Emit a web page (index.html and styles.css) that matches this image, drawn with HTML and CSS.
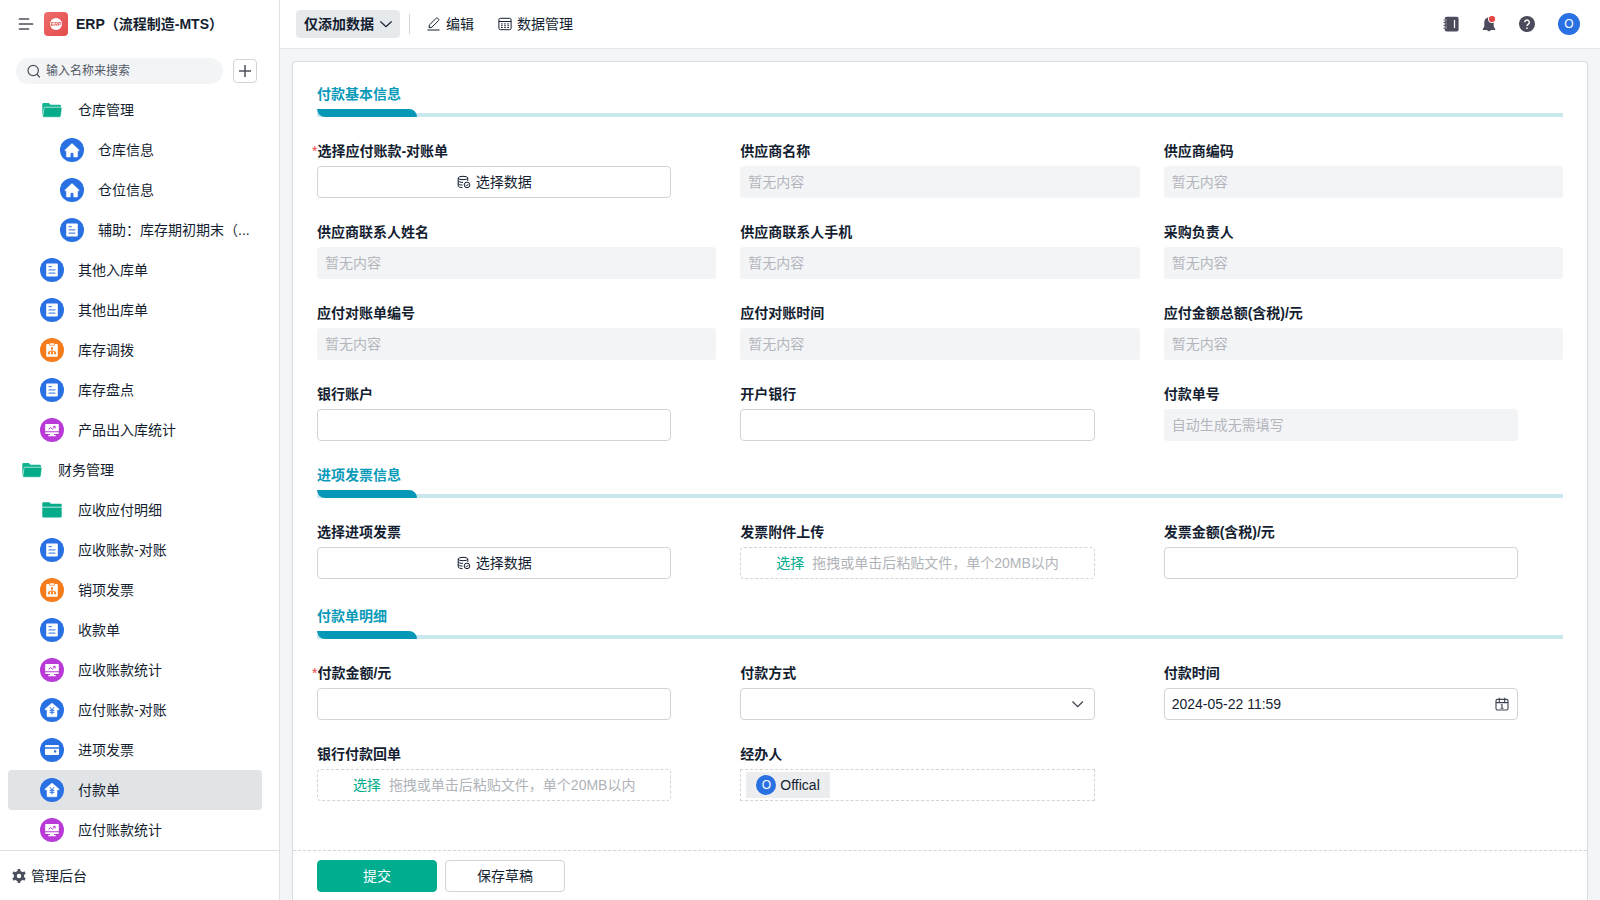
FILE: index.html
```html
<!DOCTYPE html>
<html lang="zh-CN">
<head>
<meta charset="utf-8">
<meta name="viewport" content="width=device-width, initial-scale=1">
<title>ERP（流程制造-MTS）</title>
<link rel="stylesheet" href="styles.css">
</head>
<body>
<svg class="sprite" aria-hidden="true">
  <symbol id="i-home" viewBox="0 0 24 24"><circle cx="12" cy="12" r="12" fill="#2970e3"/><path d="M12 5.400 19 12c.3.400.1.800-.4.800H17.600v5.400a.8.800 0 0 1-.8.800H13.700v-4.200h-3.400V19H7.200a.8.800 0 0 1-.8-.8v-5.400H5.400c-.5 0-.7-.4-.4-.8z" fill="#fff" stroke="#fff" stroke-width=".5" stroke-linejoin="round"/></symbol>
  <symbol id="i-doc" viewBox="0 0 24 24"><circle cx="12" cy="12" r="12" fill="#2970e3"/><rect x="6.200" y="5.400" width="11.600" height="13.200" rx="1" fill="#fff"/><path d="M8.600 8.700h3.200M8.600 11.800h6.800M8.600 15.200h6.800" stroke="#2970e3" stroke-width="1.200" opacity=".8"/></symbol>
  <symbol id="i-flow" viewBox="0 0 24 24"><circle cx="12" cy="12" r="12" fill="#f57b1d"/><rect x="6.200" y="6" width="11.600" height="12.700" rx="1" fill="#fff"/><path d="M9.500 5h5v2.300h-5z" fill="#fff" stroke="#f57b1d" stroke-width=".7"/><path d="M12 11v4M9 15v-1.700h6V15" fill="none" stroke="#f57b1d" stroke-width=".9"/><path d="M11 9.300h2v2h-2zM7.900 14.300h2.100v2H7.900zM11 14.300h2v2h-2zM14 14.300h2.100v2H14z" fill="#f57b1d"/></symbol>
  <symbol id="i-chart" viewBox="0 0 24 24"><circle cx="12" cy="12" r="12" fill="#b83bd8"/><path d="M6 6h12a.8.800 0 0 1 .8.800v6.400H5.200V6.800A.8.800 0 0 1 6 6zM5.200 14.200h13.600v.9a.9.900 0 0 1-.9.900H14v1h1.700v1.300H8.300V17H10v-1H6.100a.9.900 0 0 1-.9-.9z" fill="#fff"/><path d="m8.500 11.600 2.200-2.100 1.600 1.600 2.600-2.400M13.200 8.400h2v2" fill="none" stroke="#b83bd8" stroke-width="1"/></symbol>
  <symbol id="i-yen" viewBox="0 0 24 24"><circle cx="12" cy="12" r="12" fill="#2970e3"/><path d="M12 5 19 11c.3.400.1.800-.4.800H17v6.200a.8.800 0 0 1-.8.800H7.800A.8.800 0 0 1 7 18v-6.200H5.400c-.5 0-.7-.4-.4-.8z" fill="#fff" stroke="#fff" stroke-width=".5" stroke-linejoin="round"/><path d="m10 9.200 2 2.800 2-2.800M12 12v4.500M9.700 12.400h4.600M9.700 14.300h4.600" fill="none" stroke="#2970e3" stroke-width="1"/></symbol>
  <symbol id="i-card" viewBox="0 0 24 24"><circle cx="12" cy="12" r="12" fill="#2970e3"/><path d="M6 7h12a1 1 0 0 1 1 1v1.200H5V8a1 1 0 0 1 1-1zM5 10.700h14V16a1 1 0 0 1-1 1H6a1 1 0 0 1-1-1z" fill="#fff"/><rect x="14" y="12.300" width="2.300" height="2.300" rx=".6" fill="#2970e3"/></symbol>
  <symbol id="i-open" viewBox="0 0 24 24"><path d="M2.300 18V6.200A1.200 1.200 0 0 1 3.500 5h5.300l1.700 1.700h9.300A1.200 1.200 0 0 1 21 7.900v1.300H4.700z" fill="#11b391"/><path d="M5.100 9.200h16a.8.800 0 0 1 .8.900l-1 8a1.200 1.200 0 0 1-1.200 1.100H3.900a1.100 1.100 0 0 1-1.100-1.300l1.200-7.600a1.200 1.200 0 0 1 1.100-1.100z" fill="#06ac8a" stroke="#fff" stroke-width=".5"/></symbol>
  <symbol id="i-closed" viewBox="0 0 24 24"><path d="M2.300 8.700V5.500A1.200 1.200 0 0 1 3.500 4.300h6l1.400 1.500h9.800a1 1 0 0 1 1 1v1.900zM2.300 9.600h19.400v8.600a1.200 1.200 0 0 1-1.200 1.200h-17a1.200 1.200 0 0 1-1.200-1.200z" fill="#06ac8a"/></symbol>
  <symbol id="i-data" viewBox="0 0 14 14"><g fill="none" stroke="currentColor" stroke-width="1"><ellipse cx="6" cy="3" rx="4.800" ry="1.700"/><path d="M1.200 3v8c0 .9 1.800 1.500 4.300 1.600M10.800 3v2.900M1.200 5.800c0 .9 2.100 1.600 4.800 1.600M1.200 8.500c0 .9 1.800 1.500 4.300 1.600"/><circle cx="10" cy="9.900" r="2.800"/><path d="m8.700 10 1 .9 1.600-1.800"/></g></symbol>
  <symbol id="i-down" viewBox="0 0 14 14"><path d="m1.400 4.500 5.600 5.200 5.600-5.200" fill="none" stroke="currentColor" stroke-width="1.200"/></symbol>
</svg>

<div class="app">
  <aside class="sidebar">
    <header class="brand">
      <button class="plain menu-button" type="button" aria-label="菜单"><svg class="ico16" viewBox="0 0 16 16"><path d="M1.500 3h9M1.500 8h13M1.500 13h9" stroke="#4c4f5c" stroke-width="1.700" stroke-linecap="round"/></svg></button>
      <span class="logo"><span class="logo-text">ERP</span></span>
      <h1 class="brand-name">ERP（流程制造-MTS）</h1>
    </header>
    <div class="search-row">
      <label class="search">
        <svg class="ico14" viewBox="0 0 14 14"><g fill="none" stroke="#4c4f5c" stroke-width="1.200" stroke-linecap="round"><circle cx="6.200" cy="6.500" r="5.200"/><path d="m10.100 10.400 2.400 2.600"/></g></svg>
        <input class="search-input" type="text" placeholder="输入名称来搜索" aria-label="输入名称来搜索">
      </label>
      <button class="add-button" type="button" aria-label="添加"><svg class="ico14" viewBox="0 0 14 14"><path d="M7 1v12M1 7h12" stroke="#4c4f5c" stroke-width="1.500"/></svg></button>
    </div>
    <nav class="nav">
      <button class="item level2" type="button"><svg class="ico24"><use href="#i-open"/></svg><span>仓库管理</span></button>
      <a class="item level3" href="#"><svg class="ico24"><use href="#i-home"/></svg><span>仓库信息</span></a>
      <a class="item level3" href="#"><svg class="ico24"><use href="#i-home"/></svg><span>仓位信息</span></a>
      <a class="item level3" href="#"><svg class="ico24"><use href="#i-doc"/></svg><span>辅助：库存期初期末（...</span></a>
      <a class="item level2" href="#"><svg class="ico24"><use href="#i-doc"/></svg><span>其他入库单</span></a>
      <a class="item level2" href="#"><svg class="ico24"><use href="#i-doc"/></svg><span>其他出库单</span></a>
      <a class="item level2" href="#"><svg class="ico24"><use href="#i-flow"/></svg><span>库存调拨</span></a>
      <a class="item level2" href="#"><svg class="ico24"><use href="#i-doc"/></svg><span>库存盘点</span></a>
      <a class="item level2" href="#"><svg class="ico24"><use href="#i-chart"/></svg><span>产品出入库统计</span></a>
      <button class="item level1" type="button"><svg class="ico24"><use href="#i-open"/></svg><span>财务管理</span></button>
      <button class="item level2" type="button"><svg class="ico24"><use href="#i-closed"/></svg><span>应收应付明细</span></button>
      <a class="item level2" href="#"><svg class="ico24"><use href="#i-doc"/></svg><span>应收账款-对账</span></a>
      <a class="item level2" href="#"><svg class="ico24"><use href="#i-flow"/></svg><span>销项发票</span></a>
      <a class="item level2" href="#"><svg class="ico24"><use href="#i-doc"/></svg><span>收款单</span></a>
      <a class="item level2" href="#"><svg class="ico24"><use href="#i-chart"/></svg><span>应收账款统计</span></a>
      <a class="item level2" href="#"><svg class="ico24"><use href="#i-yen"/></svg><span>应付账款-对账</span></a>
      <a class="item level2" href="#"><svg class="ico24"><use href="#i-card"/></svg><span>进项发票</span></a>
      <a class="item level2 active" href="#" aria-current="page"><svg class="ico24"><use href="#i-yen"/></svg><span>付款单</span></a>
      <a class="item level2" href="#"><svg class="ico24"><use href="#i-chart"/></svg><span>应付账款统计</span></a>
    </nav>
    <a class="admin" href="#"><svg class="ico14" viewBox="0 0 14 14"><circle cx="7" cy="7" r="3.700" fill="none" stroke="#4c4f5c" stroke-width="3"/><path d="M7 0v3M7 11v3M.95 3.500l2.600 1.500M10.450 9l2.600 1.500M.95 10.500 3.550 9M10.450 5l2.600-1.500" stroke="#4c4f5c" stroke-width="2.800"/></svg><span>管理后台</span></a>
  </aside>

  <div class="workspace">
    <header class="toolbar">
      <button class="mode" type="button">仅添加数据<svg class="ico14"><use href="#i-down"/></svg></button>
      <span class="divider"></span>
      <button class="plain tool" type="button"><svg class="ico14" viewBox="0 0 14 14"><g fill="none" stroke="currentColor" stroke-width="1" stroke-linejoin="round"><path d="m2 10.700.5-2.900 6.800-6.600a.9.900 0 0 1 1.300 0l1 1a.9.900 0 0 1 0 1.300l-6.700 6.700zM.5 13h12"/></g></svg>编辑</button>
      <button class="plain tool" type="button"><svg class="ico14" viewBox="0 0 14 14"><rect x=".9" y="1.300" width="12.200" height="11.400" rx="1.500" fill="none" stroke="currentColor" stroke-width="1"/><path d="M1 4.500h12" stroke="currentColor" stroke-width="1"/><path d="M3.100 6.900h1.600M6.200 6.900h1.600M9.300 6.900h1.600M3.100 8.700h1.600M6.200 8.700h1.600M9.300 8.700h1.600M3.100 10.500h1.600M6.200 10.500h1.600M9.300 10.500h1.600" stroke="currentColor" stroke-width="1"/></svg>数据管理</button>
      <div class="actions">
        <button class="plain" type="button" aria-label="通讯录"><svg class="ico16" viewBox="0 0 16 16"><rect x="1.800" y=".8" width="13.800" height="14.600" rx="2" fill="#4b4c5b"/><path d="M.4 4h3.200M.4 6.700h3.200M.4 9.400h3.200M.4 12.100h3.200" stroke="#fff" stroke-width="2"/><path d="M.6 4h2.600M.6 6.700h2.600M.6 9.400h2.600M.6 12.100h2.600" stroke="#4b4c5b" stroke-width="1.200"/><path d="M3 1v14" stroke="#4b4c5b" stroke-width="1"/><path d="M11.500 4v8" stroke="#fff" stroke-width="1.200"/></svg></button>
        <button class="plain" type="button" aria-label="通知"><svg class="ico16" viewBox="0 0 16 16"><path d="M8 1.200a5 5 0 0 0-4.700 5v4.200L1.800 13v.9h4.300a2 2 0 0 0 3.800 0h4.300V13l-1.500-2.600V6.200A5 5 0 0 0 8 1.200z" fill="#4b4c5b"/><circle cx="11" cy="3" r="3.700" fill="#e64545" stroke="#fff" stroke-width="1"/></svg></button>
        <button class="plain" type="button" aria-label="帮助"><svg class="ico16" viewBox="0 0 16 16"><circle cx="8" cy="8" r="8" fill="#4b4c5b"/><path d="M5.700 6.300a2.300 2.300 0 1 1 3.600 1.900C8.400 8.800 8 9.200 8 10.100M8 11.400v1.500" fill="none" stroke="#fff" stroke-width="1.400"/></svg></button>
      </div>
      <button class="plain avatar avatar-lg" type="button">O</button>
    </header>

    <main class="page">
      <form class="card">
        <div class="form-body">
          <h2 class="section-title">付款基本信息</h2>
          <div class="grid">
            <div class="field"><label class="label" for="f1"><span class="required">*</span>选择应付账款-对账单</label><button class="control pick" id="f1" type="button"><svg class="ico14"><use href="#i-data"/></svg>选择数据</button></div>
            <div class="field"><label class="label" for="f2">供应商名称</label><input class="control wide" id="f2" type="text" placeholder="暂无内容" disabled></div>
            <div class="field"><label class="label" for="f3">供应商编码</label><input class="control wide" id="f3" type="text" placeholder="暂无内容" disabled></div>
            <div class="field"><label class="label" for="f4">供应商联系人姓名</label><input class="control wide" id="f4" type="text" placeholder="暂无内容" disabled></div>
            <div class="field"><label class="label" for="f5">供应商联系人手机</label><input class="control wide" id="f5" type="text" placeholder="暂无内容" disabled></div>
            <div class="field"><label class="label" for="f6">采购负责人</label><input class="control wide" id="f6" type="text" placeholder="暂无内容" disabled></div>
            <div class="field"><label class="label" for="f7">应付对账单编号</label><input class="control wide" id="f7" type="text" placeholder="暂无内容" disabled></div>
            <div class="field"><label class="label" for="f8">应付对账时间</label><input class="control wide" id="f8" type="text" placeholder="暂无内容" disabled></div>
            <div class="field"><label class="label" for="f9">应付金额总额(含税)/元</label><input class="control wide" id="f9" type="text" placeholder="暂无内容" disabled></div>
            <div class="field"><label class="label" for="f10">银行账户</label><input class="control" id="f10" type="text"></div>
            <div class="field"><label class="label" for="f11">开户银行</label><input class="control" id="f11" type="text"></div>
            <div class="field"><label class="label" for="f12">付款单号</label><input class="control" id="f12" type="text" placeholder="自动生成无需填写" disabled></div>
          </div>

          <h2 class="section-title">进项发票信息</h2>
          <div class="grid">
            <div class="field"><label class="label" for="f13">选择进项发票</label><button class="control pick" id="f13" type="button"><svg class="ico14"><use href="#i-data"/></svg>选择数据</button></div>
            <div class="field"><label class="label" for="f14">发票附件上传</label><button class="control upload" id="f14" type="button"><span class="choose">选择</span>拖拽或单击后粘贴文件，单个20MB以内</button></div>
            <div class="field"><label class="label" for="f15">发票金额(含税)/元</label><input class="control" id="f15" type="text"></div>
          </div>

          <h2 class="section-title">付款单明细</h2>
          <div class="grid">
            <div class="field"><label class="label" for="f16"><span class="required">*</span>付款金额/元</label><input class="control" id="f16" type="text"></div>
            <div class="field"><label class="label" for="f17">付款方式</label><div class="with-icon"><select class="control" id="f17"><option></option></select><svg class="ico14" viewBox="0 0 14 14"><path d="m.5 4.500 5.200 5.200 5.200-5.200" fill="none" stroke="currentColor" stroke-width="1.300"/></svg></div></div>
            <div class="field"><label class="label" for="f18">付款时间</label><div class="with-icon"><input class="control" id="f18" type="text" value="2024-05-22 11:59"><svg class="ico14" viewBox="0 0 14 14"><g fill="none" stroke="currentColor" stroke-width="1.100"><rect x="1" y="2.400" width="12" height="10.600" rx="1.400"/><path d="M1 5.600h12M4.300.7v4.200M9.700.7v4.200M5.800 7.800H7v3.400M5.600 11.200h2.800"/></g></svg></div></div>
            <div class="field"><label class="label" for="f19">银行付款回单</label><button class="control upload" id="f19" type="button"><span class="choose">选择</span>拖拽或单击后粘贴文件，单个20MB以内</button></div>
            <div class="field"><label class="label" for="f20">经办人</label><button class="control members" id="f20" type="button"><span class="chip"><span class="avatar avatar-sm">O</span>Offical</span></button></div>
          </div>
        </div>
        <footer class="form-footer">
          <button class="button primary" type="submit">提交</button>
          <button class="button" type="button">保存草稿</button>
        </footer>
      </form>
    </main>
  </div>
</div>
</body>
</html>
```
FILE: styles.css
```css
* { box-sizing: border-box; }

body,
button,
input,
select {
  font-family: "Liberation Sans", "Noto Sans CJK SC", sans-serif;
  font-size: 14px;
  line-height: 20px;
  color: #141e31;
}

body {
  margin: 0;
  background: #f3f5f7;
}

button { cursor: pointer; }
a { color: inherit; text-decoration: none; }
svg { flex: none; display: block; }

.sprite { position: absolute; width: 0; height: 0; }
.ico14 { width: 14px; height: 14px; }
.ico16 { width: 16px; height: 16px; }
.ico24 { width: 24px; height: 24px; }

.plain {
  display: flex;
  align-items: center;
  padding: 0;
  border: 0;
  background: none;
}

.app {
  display: flex;
  height: 100vh;
}

/* Sidebar */
.sidebar {
  flex: none;
  display: flex;
  flex-direction: column;
  width: 280px;
  border-right: 1px solid #dfe2e5;
  background: #fff;
}

.brand {
  display: flex;
  align-items: center;
  height: 48px;
  padding-left: 18px;
}

.logo {
  display: flex;
  align-items: center;
  justify-content: center;
  width: 24px;
  height: 24px;
  margin: 0 8px 0 10px;
  border-radius: 4px;
  background: linear-gradient(135deg, #ec6f6c, #e44b4a);
}

.logo-text {
  width: 12px;
  height: 12px;
  border-radius: 50%;
  background: #fff;
  color: #e65351;
  font-size: 5px;
  font-style: italic;
  font-weight: 700;
  line-height: 12px;
  text-align: center;
}

.brand-name {
  margin: 0;
  font-size: 14px;
  font-weight: 600;
  white-space: nowrap;
}

.search-row {
  display: flex;
  align-items: center;
  gap: 10px;
  padding: 10px 22px 6px 16px;
}

.search {
  flex: 1;
  display: flex;
  align-items: center;
  gap: 5px;
  min-width: 0;
  height: 26px;
  padding: 0 12px 0 11px;
  border-radius: 13px;
  background: #f2f4f5;
}

.search-input {
  flex: 1;
  min-width: 0;
  padding: 0;
  border: 0;
  outline: 0;
  background: none;
  font-size: 12px;
}

.search-input::placeholder { color: #525967; opacity: 1; }

.add-button {
  display: flex;
  align-items: center;
  justify-content: center;
  width: 24px;
  height: 24px;
  padding: 0;
  border: 1px solid #d3d4d8;
  border-radius: 4px;
  background: #fff;
}

.nav {
  flex: 1;
  display: flex;
  flex-direction: column;
  min-height: 0;
  padding: 0 17px 0 8px;
  overflow: hidden;
}

.item {
  flex: none;
  display: flex;
  align-items: center;
  gap: 14px;
  height: 40px;
  padding: 0 8px 0 12px;
  border: 0;
  border-radius: 4px;
  background: none;
  text-align: left;
  white-space: nowrap;
}

.level2 { padding-left: 32px; }
.level3 { padding-left: 52px; }
.active { background: #e1e4e7; }

.admin {
  display: flex;
  align-items: center;
  gap: 5px;
  height: 50px;
  padding-left: 12px;
  border-top: 1px solid #dfe2e5;
}

/* Toolbar */
.workspace {
  flex: 1;
  display: flex;
  flex-direction: column;
  min-width: 0;
}

.toolbar {
  flex: none;
  display: flex;
  align-items: center;
  height: 49px;
  padding: 0 20px 0 16px;
  border-bottom: 1px solid #e4e6e9;
  background: #fff;
}

.mode {
  display: flex;
  align-items: center;
  gap: 5px;
  height: 28px;
  padding: 0 7px 0 8px;
  border: 0;
  border-radius: 4px;
  background: #e6e9ec;
  font-weight: 600;
  white-space: nowrap;
}

.divider {
  width: 1px;
  height: 20px;
  margin: 0 17px 0 9px;
  background: #d5d7da;
}

.tool {
  gap: 5px;
  margin-right: 24px;
  white-space: nowrap;
}

.actions {
  display: flex;
  align-items: center;
  gap: 22px;
  margin: 0 23px 0 auto;
}

.avatar {
  display: flex;
  align-items: center;
  justify-content: center;
  border-radius: 50%;
  background: #2970e3;
  color: #fff;
  font-size: 12px;
}

.avatar-lg { width: 22px; height: 22px; }
.avatar-sm { width: 20px; height: 20px; }

/* Form */
.page {
  flex: 1;
  display: flex;
  min-height: 0;
  padding: 12px 12px 0;
}

.card {
  flex: 1;
  display: flex;
  flex-direction: column;
  min-width: 0;
  border: 1px solid #d9dde0;
  border-bottom: 0;
  border-radius: 4px 4px 0 0;
  background: #fff;
}

.form-body {
  flex: 1;
  min-height: 0;
  padding: 22px 24px;
  overflow: hidden;
}

.section-title {
  margin: 0 0 24px;
  color: #0a9ab9;
  font-size: 14px;
  font-weight: 600;
  line-height: 20px;
  border-bottom: 4px solid #c9e8ed;
}

.section-title::after {
  content: "";
  display: block;
  width: 100px;
  height: 8px;
  margin: 5px 0 -4px;
  border-radius: 0 8px 0 8px;
  background: #0798b8;
}

.grid {
  display: grid;
  grid-template-columns: repeat(3, minmax(0, 1fr));
  gap: 24px;
  margin-bottom: 24px;
}

.label {
  display: block;
  margin-bottom: 5px;
  font-weight: 600;
}

.required {
  margin-left: -5px;
  color: #e64545;
  font-weight: 400;
}

.control {
  display: block;
  width: calc(100% - 45px);
  height: 32px;
  padding: 0 7px;
  border: 1px solid #d3d4d8;
  border-radius: 4px;
  background: #fff;
}

.wide { width: 100%; }

.control:disabled {
  border-color: #f3f4f6;
  border-radius: 3px;
  background: #f3f4f6;
}

.control::placeholder { color: #b3b6bd; opacity: 1; }

.pick,
.upload {
  display: flex;
  align-items: center;
  justify-content: center;
  gap: 5px;
}

.upload {
  gap: 8px;
  margin-bottom: 3px;
  border-style: dashed;
  color: #b0b3b8;
  white-space: nowrap;
}

.choose { color: #00ad8c; }

.with-icon {
  position: relative;
  width: calc(100% - 45px);
}

.with-icon .control { width: 100%; }

.with-icon svg {
  position: absolute;
  top: 9px;
  right: 9px;
  color: #3d4350;
  pointer-events: none;
}

select.control { appearance: none; }

.members {
  display: flex;
  align-items: center;
  padding: 0 5px;
  border-style: dashed;
  border-radius: 0;
}

.chip {
  display: flex;
  align-items: center;
  gap: 4px;
  height: 26px;
  padding: 0 10px;
  background: #ecedef;
}

.form-footer {
  flex: none;
  display: flex;
  gap: 8px;
  padding: 9px 24px 8px;
  border-top: 1px dashed #d3d4d8;
}

.button {
  width: 120px;
  height: 32px;
  padding: 0;
  border: 1px solid #d3d4d8;
  border-radius: 4px;
  background: #fff;
}

.primary {
  border-color: #00ae8f;
  background: #00ae8f;
  color: #fff;
}
```
